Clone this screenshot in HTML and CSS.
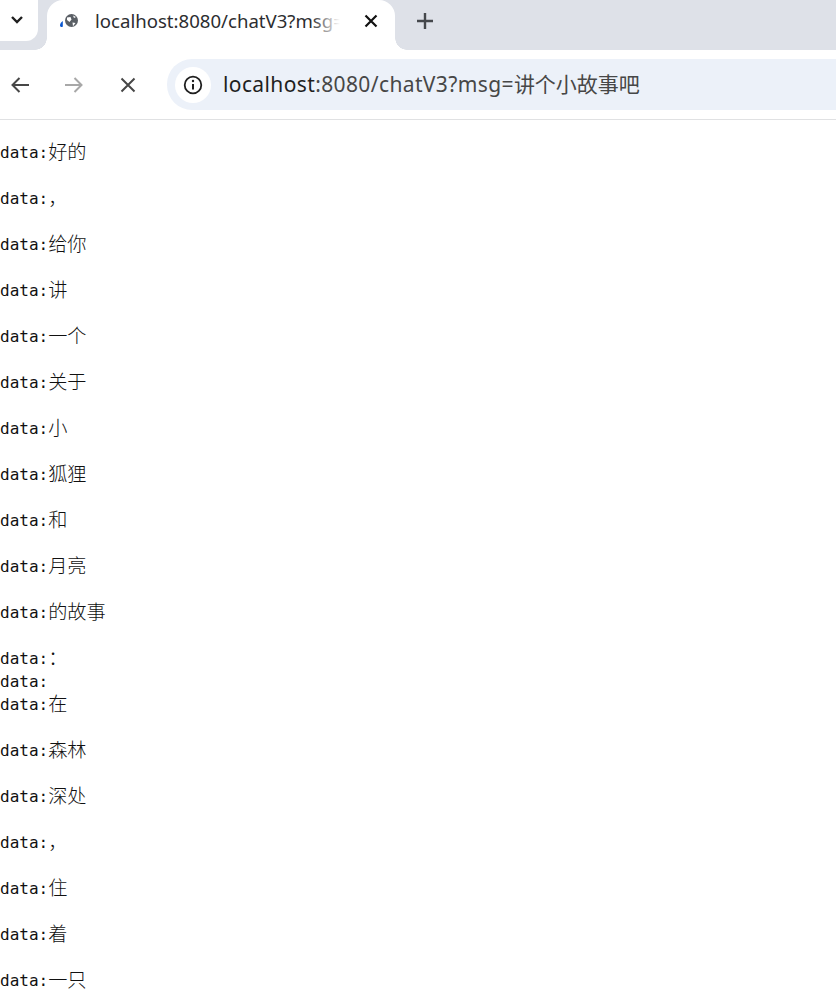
FILE: index.html
```html
<!DOCTYPE html>
<html lang="zh-CN">
<head>
<meta charset="utf-8">
<title>localhost:8080/chatV3?msg=讲个小故事吧</title>
<link rel="stylesheet" href="styles.css">
</head>
<body>
<header class="browser">
  <div class="tabstrip">
    <div class="tabsearch">
      <button class="tabsearch-btn" aria-label="Search tabs">
        <svg width="14" height="10" viewBox="0 0 14 10"><path d="M2 2l5 5 5-5" fill="none" stroke="#1f1f1f" stroke-width="2.4"/></svg>
      </button>
    </div>
    <div class="tab">
      <svg class="favicon" width="20" height="16" viewBox="0 0 20 16">
        <path d="M3.800 8C2 9 1 11 1 12.500 1 14 3 14.500 3.800 13.500z" fill="#0b57d0"/>
        <circle cx="12.500" cy="7.500" r="6.500" fill="#5a5f65"/>
        <path d="M8 4.500l3.500-.5 1 2.500-2 2.500-2.500-2zM13.500 9.500l3 .5-2.500 3.200zM14 2.500l3 1.500-2 1z" fill="#fff"/>
      </svg>
      <span class="tab-title">localhost:8080/chatV3?msg=</span>
      <svg class="tab-close" width="14" height="14" viewBox="0 0 14 14"><path d="M1.500 1.500l11 11M12.500 1.500l-11 11" stroke="#111" stroke-width="2.200" fill="none"/></svg>
    </div>
    <svg class="newtab" width="18" height="18" viewBox="0 0 18 18"><path d="M9 1v16M1 9h16" stroke="#45484c" stroke-width="2.400" fill="none"/></svg>
  </div>
  <div class="toolbar">
    <div class="navs">
      <svg class="nav-icon" width="20" height="18" viewBox="0 0 20 18"><path d="M19 9H2.500M9.500 2l-7 7 7 7" fill="none" stroke="#474747" stroke-width="2"/></svg>
      <svg class="nav-icon" width="20" height="18" viewBox="0 0 20 18"><path d="M1 9h16.500M10.500 2l7 7-7 7" fill="none" stroke="#a8a8a8" stroke-width="2"/></svg>
      <svg class="nav-icon nav-stop" width="16" height="16" viewBox="0 0 16 16"><path d="M1.500 1.500l13 13M14.500 1.500l-13 13" fill="none" stroke="#474747" stroke-width="2"/></svg>
    </div>
    <div class="omnibox">
      <span class="site-info">
        <svg width="20" height="20" viewBox="0 0 20 20"><circle cx="10" cy="10" r="8.300" fill="none" stroke="#1f1f1f" stroke-width="1.800"/><path d="M10 9v5.500" stroke="#1f1f1f" stroke-width="2"/><circle cx="10" cy="6" r="1.200" fill="#1f1f1f"/></svg>
      </span>
      <span class="url"><span class="url-host">localhost</span>:8080/chatV3?msg=<span class="url-zh">讲个小故事吧</span></span>
    </div>
  </div>
</header>
<pre class="stream">data:<span class="zh">好的</span>

data:<span class="zh">，</span>

data:<span class="zh">给你</span>

data:<span class="zh">讲</span>

data:<span class="zh">一个</span>

data:<span class="zh">关于</span>

data:<span class="zh">小</span>

data:<span class="zh">狐狸</span>

data:<span class="zh">和</span>

data:<span class="zh">月亮</span>

data:<span class="zh">的故事</span>

data:<span class="zh">：</span>
data:
data:<span class="zh">在</span>

data:<span class="zh">森林</span>

data:<span class="zh">深处</span>

data:<span class="zh">，</span>

data:<span class="zh">住</span>

data:<span class="zh">着</span>

data:<span class="zh">一只</span>
</pre>
</body>
</html>
```
FILE: styles.css
```css
* { box-sizing: border-box; }
html, body { height: 100%; }
body {
  margin: 0;
  overflow: hidden;
  background: #fff;
}
.browser {
  font-family: "Noto Sans", "Noto Sans CJK SC", sans-serif;
  border-bottom: 1px solid #e0e1e3;
}
.tabstrip {
  display: flex;
  align-items: flex-start;
  height: 50px;
  background: #dee1e8;
}
.tabsearch {
  width: 47px;
}
.tabsearch-btn {
  display: flex;
  align-items: center;
  justify-content: center;
  width: 38px;
  height: 41px;
  padding: 0 4px 2px 0;
  border: 0;
  border-radius: 0 0 12px 0;
  background: #fff;
}
.tab {
  position: relative;
  display: flex;
  align-items: center;
  width: 348px;
  height: 50px;
  padding: 0 15px 8px 12px;
  background: #fff;
  border-radius: 16px 16px 0 0;
}
.tab::before,
.tab::after {
  content: "";
  position: absolute;
  bottom: 0;
  width: 12px;
  height: 12px;
}
.tab::before {
  left: -12px;
  background: radial-gradient(circle at 0 0, transparent 11.500px, #fff 12px);
}
.tab::after {
  right: -12px;
  background: radial-gradient(circle at 100% 0, transparent 11.500px, #fff 12px);
}
.favicon { flex: none; }
.tab-title {
  position: relative;
  flex: none;
  width: 250px;
  margin-left: 16px;
  overflow: hidden;
  font-size: 18.600px;
  line-height: 26px;
  white-space: nowrap;
  color: #2c2d30;
}
.tab-title::after {
  content: "";
  position: absolute;
  top: 0;
  right: 0;
  bottom: 0;
  width: 34px;
  background: linear-gradient(to right, rgba(255,255,255,0), #fff 85%);
}
.tab-close { flex: none; margin-left: 19px; }
.newtab { flex: none; margin: 12px 0 0 21px; }
.toolbar {
  display: flex;
  align-items: center;
  height: 69px;
  padding: 0 0 0 10px;
  background: #fff;
}
.navs {
  display: flex;
  align-items: center;
  gap: 34px;
  width: 157px;
}
.nav-stop { margin-left: 2px; }
.omnibox {
  flex: 1;
  display: flex;
  align-items: center;
  height: 51px;
  padding-left: 8px;
  background: #ecf1f9;
  border-radius: 25px 0 0 25px;
}
.site-info {
  display: flex;
  align-items: center;
  justify-content: center;
  width: 36px;
  height: 36px;
  background: #fff;
  border-radius: 50%;
}
.url {
  margin: 0 0 3px 12px;
  font-size: 21px;
  letter-spacing: 0.380px;
  white-space: nowrap;
  color: #474747;
}
.url-host { color: #1f1f1f; }
.url-zh { letter-spacing: 0; }
.stream {
  margin: 0;
  padding-top: 21px;
  font-family: "DejaVu Sans Mono", monospace;
  font-size: 16px;
  line-height: 23px;
  color: #111;
}
.zh {
  font-family: "Noto Sans CJK SC", sans-serif;
  font-size: 19.200px;
  font-weight: 300;
  line-height: 0;
  vertical-align: -1px;
}
```
